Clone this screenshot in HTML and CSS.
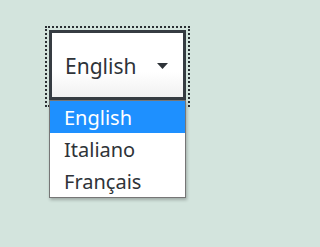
FILE: index.html
```html
<!DOCTYPE html>
<html>
<head>
<meta charset="utf-8">
<link rel="stylesheet" href="styles.css">
</head>
<body>
<div class="stage">
  <div class="focus-ring">
    <div class="select">
      <span class="value">English</span>
      <svg class="arrow" width="11" height="6" viewBox="0 0 11 6"><path d="M0 0H11L5.5 6Z" fill="#2e3338"/></svg>
    </div>
    <ul class="listbox">
      <li class="option selected">English</li>
      <li class="option">Italiano</li>
      <li class="option">Français</li>
    </ul>
  </div>
</div>
</body>
</html>
```
FILE: styles.css
```css
html, body {
  margin: 0;
  padding: 0;
}
body {
  background: #d3e4dd;
  width: 230px;
  height: 247px;
  font-family: "Noto Sans", "Open Sans", sans-serif;
  overflow: hidden;
}
.stage {
  padding: 26px 0 0 45px;
}
.focus-ring {
  position: relative;
  width: 137px;
  height: 73px;
  border: 2px dotted #2a2f33;
  padding: 2px;
  box-sizing: content-box;
}
.select {
  box-sizing: border-box;
  height: 70px;
  border: 3px solid #363c42;
  background: linear-gradient(#ffffff 60%, #f1f1f1);
  display: flex;
  align-items: center;
  justify-content: space-between;
  padding: 0 15px 0 13px;
  color: #2e3338;
  font-size: 21px;
}
.value {
  line-height: 1;
  margin-top: 3px;
}
.arrow {
  display: block;
  margin-top: 2px;
}
.listbox {
  position: absolute;
  left: 2px;
  top: 72px;
  width: 137px;
  margin: 0;
  padding: 0;
  list-style: none;
  background: #ffffff;
  border: 1px solid #767676;
  box-shadow: 1px 2px 3px rgba(0, 0, 0, 0.25);
  box-sizing: border-box;
}
.option {
  height: 32px;
  line-height: 33px;
  padding-left: 14px;
  font-size: 20px;
  color: #2e3338;
}
.option.selected {
  background: #1e90ff;
  color: #ffffff;
}
```
